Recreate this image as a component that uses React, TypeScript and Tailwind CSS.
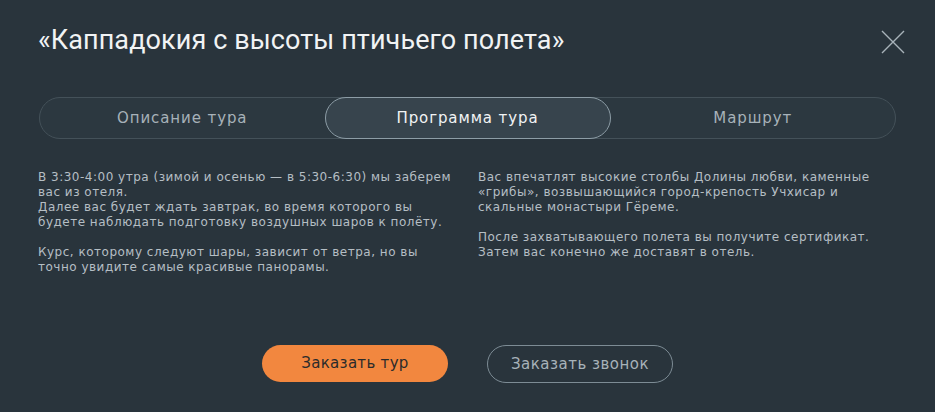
import React from "react";

export default function App() {
  const body = { fontFamily: '"DejaVu Sans", "Noto Sans", sans-serif' };
  return (
    <div className="w-[935px] h-[412px] bg-[#29343c] overflow-hidden px-[38px] pt-[22px]" style={body}>
      <div className="flex items-start justify-between h-[36px]">
        <h1
          className="text-[27px] leading-[36px] text-[#f1f3f4] tracking-[0.1px]"
          style={{ fontFamily: 'Roboto, "Liberation Sans", sans-serif' }}
        >
          «Каппадокия с высоты птичьего полета»
        </h1>
        <button className="mt-[7px] mr-[-9px] w-[26px] h-[26px] flex items-center justify-center">
          <svg width="26" height="26" viewBox="0 0 26 26" fill="none">
            <path d="M2 2 L24 24 M24 2 L2 24" stroke="#a8b3ba" strokeWidth="1.4" />
          </svg>
        </button>
      </div>

      <div className="mt-[39px] ml-[1px] w-[857px] h-[42px] rounded-full border border-[#445159] bg-[#2c3840] flex">
        <button className="flex-1 text-[15px] text-[#a7b2b9] tracking-[0.9px]">Описание тура</button>
        <button className="w-[286px] -my-px rounded-full border border-[#8d9da6] bg-[#37444d] text-[15px] text-[#f1f3f4] tracking-[0.9px]">
          Программа тура
        </button>
        <button className="flex-1 text-[15px] text-[#a7b2b9] tracking-[0.9px]">Маршрут</button>
      </div>

      <div className="mt-[31px] grid grid-cols-[416px_416px] gap-x-[24px] text-[12px] leading-[15px] text-[#b5bec4] tracking-[0.5px]">
        <div>
          <p>
            В 3:30-4:00 утра (зимой и осенью — в 5:30-6:30) мы заберем вас из отеля.
            <br />
            Далее вас будет ждать завтрак, во время которого вы будете наблюдать подготовку воздушных шаров к полёту.
          </p>
          <p className="mt-[15px]">
            Курс, которому следуют шары, зависит от ветра, но вы точно увидите самые красивые панорамы.
          </p>
        </div>
        <div>
          <p>
            Вас впечатлят высокие столбы Долины любви, каменные «грибы», возвышающийся город-крепость Учхисар и скальные монастыри Гёреме.
          </p>
          <p className="mt-[15px]">
            После захватывающего полета вы получите сертификат. Затем вас конечно же доставят в отель.
          </p>
        </div>
      </div>

      <div className="mt-[70px] flex justify-center gap-[39px] -ml-[38px] mr-[-38px]">
        <button className="w-[186px] h-[37px] rounded-full bg-[#f2873f] text-[15px] text-[#2b2b2b] tracking-[0.3px]">
          Заказать тур
        </button>
        <button className="w-[186px] h-[38px] rounded-full border border-[#7d8c95] text-[15px] text-[#a7b2b9] tracking-[0.5px]">
          Заказать звонок
        </button>
      </div>
    </div>
  );
}
